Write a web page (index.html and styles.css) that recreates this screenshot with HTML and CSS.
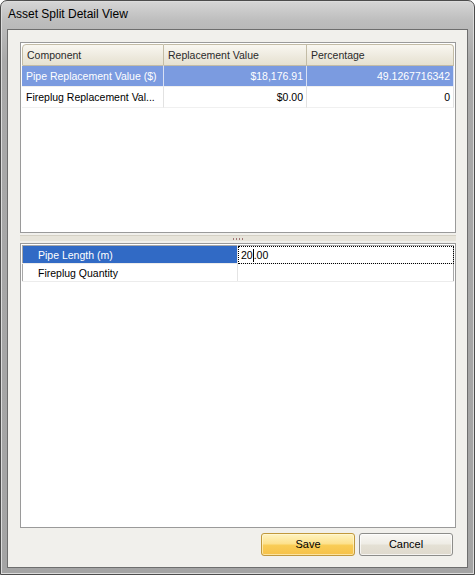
FILE: index.html
```html
<!DOCTYPE html>
<html>
<head>
<meta charset="utf-8">
<title>Asset Split Detail View</title>
<link rel="stylesheet" href="styles.css">
</head>
<body>
<div class="window">
	<div class="titlebar">Asset Split Detail View</div>
	<div class="client">
		<!-- component split grid -->
		<div class="grid-panel">
			<table class="grid">
				<colgroup>
					<col class="c1"><col class="c2"><col class="c3">
				</colgroup>
				<thead>
					<tr>
						<th>Component</th>
						<th>Replacement Value</th>
						<th class="last">Percentage</th>
					</tr>
				</thead>
				<tbody>
					<tr class="selected">
						<td>Pipe Replacement Value ($)</td>
						<td class="num">$18,176.91</td>
						<td class="num">49.1267716342</td>
					</tr>
					<tr>
						<td>Fireplug Replacement Val...</td>
						<td class="num">$0.00</td>
						<td class="num">0</td>
					</tr>
				</tbody>
			</table>
		</div>
		<div class="splitter"><div class="band"><span class="grip"></span></div></div>
		<!-- editable inputs -->
		<div class="prop-panel">
			<table class="props">
				<tr class="selected">
					<td class="label">Pipe Length (m)</td>
					<td class="value editing">20<span class="caret"></span>.00</td>
				</tr>
				<tr>
					<td class="label">Fireplug Quantity</td>
					<td class="value"></td>
				</tr>
			</table>
		</div>
		<div class="buttons">
			<div class="btn save">Save</div>
			<div class="btn cancel">Cancel</div>
		</div>
	</div>
</div>
</body>
</html>
```

FILE: styles.css
```css
html, body {
	margin: 0;
	padding: 0;
}
body {
	width: 475px;
	height: 575px;
	background: #fff;
	font: 10.5px "Liberation Sans", Arial, sans-serif;
	color: #000;
}
.window {
	box-sizing: border-box;
	width: 475px;
	height: 575px;
	display: flex;
	flex-direction: column;
	padding: 0 6px 6px;
	border: 1px solid #4c4c4c;
	border-radius: 7px 7px 0 0;
	background: linear-gradient(to bottom, #d6d6d6 0, #bdbdbd 20px, #a9a9a9 60px, #a4a4a4 100%);
	box-shadow: inset 0 0 0 1px #dcdcdc;
}
.titlebar {
	height: 28px;
	line-height: 27px;
	padding-left: 1px;
	font-size: 12px;
	color: #000;
}
.client {
	flex: 1;
	display: flex;
	flex-direction: column;
	padding: 12px 11px 11px 12px;
	border: 1px solid #6e6e6e;
	background: #f1f0ec;
}

/* upper grid */
.grid-panel {
	box-sizing: border-box;
	height: 191px;
	padding: 1px;
	border: 1px solid #9a9a9a;
	background: #fff;
}
.grid {
	width: 432px;
	border-collapse: separate;
	border-spacing: 0;
	table-layout: fixed;
}
.grid col.c1 { width: 142px; }
.grid col.c2 { width: 143px; }
.grid col.c3 { width: 147px; }
.grid th {
	height: 20px;
	padding: 0 4px;
	text-align: left;
	font-weight: normal;
	color: #2a2a2a;
	background: linear-gradient(to bottom, #f9f7f1, #ede9dd 60%, #e6e1d1);
	border-bottom: 1px solid #c3bca6;
	border-right: 1px solid #c3bca6;
	border-top: 1px solid #c3bca6;
}
.grid th:first-child {
	border-left: 1px solid #c3bca6;
	border-top-left-radius: 4px;
}
.grid th.last {
	border-top-right-radius: 4px;
}
.grid td {
	height: 20px;
	padding: 0 3px 0 4px;
	white-space: nowrap;
	overflow: hidden;
	border-bottom: 1px solid #f0f0f0;
	border-right: 1px solid #e2e2e2;
}
.grid td.num {
	text-align: right;
}
.grid tr.selected td {
	background: #7b9be0;
	color: #fff;
	border-right-color: #d8e0f4;
}

/* splitter between the panels */
.splitter {
	height: 10px;
	display: flex;
	flex-direction: column;
	justify-content: center;
}
.band {
	height: 5px;
	border-top: 1px solid #d4d0c4;
	background: #e7e4da;
	display: flex;
	justify-content: center;
	align-items: flex-end;
}
.grip {
	width: 11px;
	height: 2px;
	margin-bottom: 1px;
	background: repeating-linear-gradient(to right, #a07474 0, #a07474 1px, transparent 1px, transparent 3px);
}

/* lower property grid */
.prop-panel {
	box-sizing: border-box;
	height: 285px;
	padding: 1px;
	border: 1px solid #9a9a9a;
	background: #fff;
}
.props {
	width: 432px;
	border-collapse: collapse;
	table-layout: fixed;
	border: 1px solid #a8a8a8;
}
.props td {
	height: 17px;
	padding: 0;
	white-space: nowrap;
}
.props td.label {
	width: 199px;
	padding-left: 15px;
	border-bottom: 1px solid #ececec;
}
.props td.value {
	padding-left: 3px;
	border-left: 1px solid #e4e4e4;
	border-bottom: 1px solid #ececec;
}
.props tr.selected td.label {
	background: #316ac5;
	color: #fff;
}
.props td.editing {
	outline: 1px dotted #000;
	outline-offset: -1px;
}
.caret {
	display: inline-block;
	width: 1px;
	height: 13px;
	margin: 0 0 -3px;
	background: #000;
	vertical-align: baseline;
}

/* dialog buttons */
.buttons {
	display: flex;
	justify-content: flex-end;
	gap: 4px;
	margin-top: 5px;
	padding-right: 3px;
}
.btn {
	box-sizing: border-box;
	width: 94px;
	height: 23px;
	line-height: 21px;
	text-align: center;
	border-radius: 3px;
	font-size: 11px;
}
.btn.save {
	border: 1px solid #c1983c;
	background: linear-gradient(to bottom, #fff3c1, #fde28e 45%, #f9cc55 55%, #f6c148);
	box-shadow: inset 0 0 0 1px rgba(255, 250, 220, 0.6);
}
.btn.cancel {
	border: 1px solid #8d8d8a;
	background: linear-gradient(to bottom, #f9f8f5, #efede6 45%, #e4e0d4 55%, #dfdace);
	box-shadow: inset 0 0 0 1px rgba(255, 255, 255, 0.7);
}
```
